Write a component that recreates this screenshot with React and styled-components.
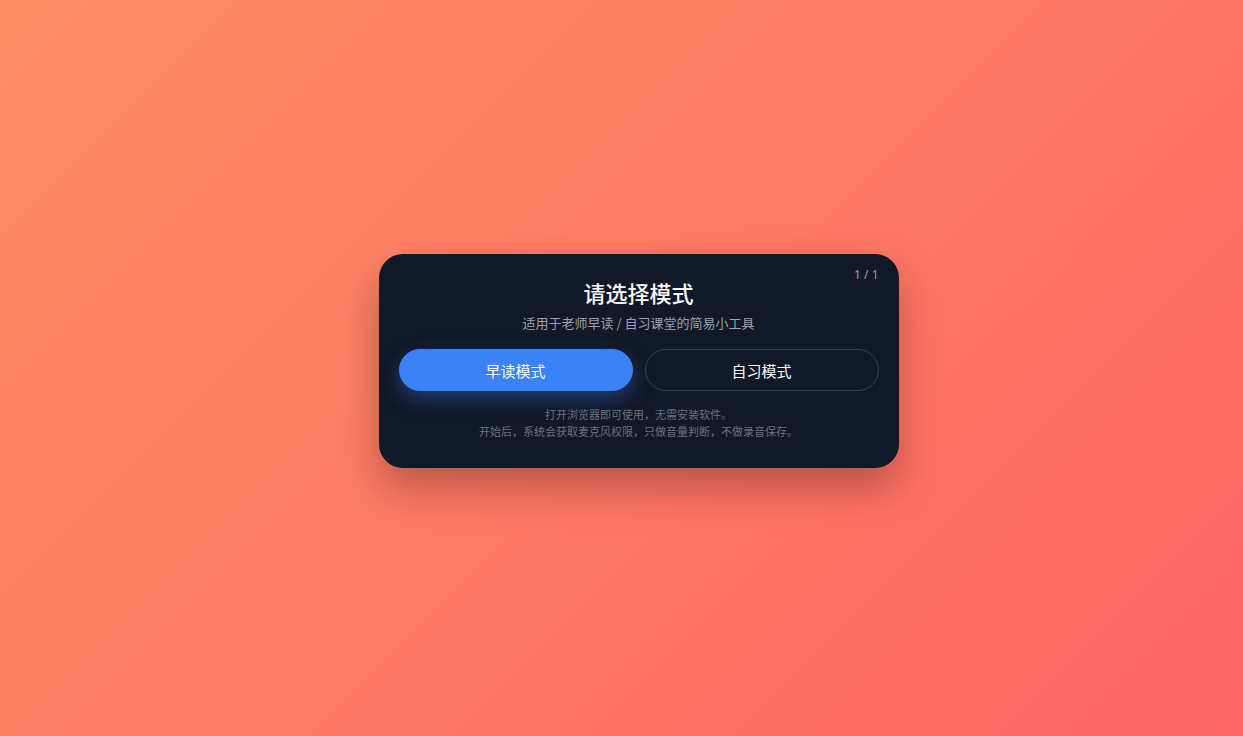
import React from 'react';
import styled, { createGlobalStyle } from 'styled-components';

const GlobalStyle = createGlobalStyle`
    html, body, #root {
        margin: 0;
        height: 100%;
    }
    body {
        font-family: "Noto Sans CJK SC", "Noto Sans", sans-serif;
    }
`;

const Page = styled.div`
    height: 100vh;
    box-sizing: border-box;
    padding: 0 0 14px 34px;
    display: flex;
    align-items: center;
    justify-content: center;
    background: linear-gradient(135deg, #ff8e66 0%, #ff6663 100%);
`;

const Card = styled.div`
    position: relative;
    width: 520px;
    box-sizing: border-box;
    padding: 22px 20px 28px;
    background: #111827;
    border-radius: 24px;
    box-shadow: 0 20px 40px rgba(60, 20, 20, 0.35);
    display: flex;
    flex-direction: column;
    align-items: center;
    color: #f9fafb;
`;

const Counter = styled.span`
    position: absolute;
    top: 12px;
    right: 20px;
    font-size: 12px;
    color: #9ca3af;
    font-family: "Noto Sans", sans-serif;
`;

const Title = styled.h1`
    margin: 0;
    font-size: 22px;
    font-weight: 500;
    line-height: 32px;
    color: #f9fafb;
`;

const Subtitle = styled.p`
    margin: 5px 0 0;
    font-size: 13px;
    line-height: 20px;
    color: #9ca3af;
`;

const ButtonRow = styled.div`
    margin-top: 16px;
    width: 100%;
    display: grid;
    grid-template-columns: 1fr 1fr;
    gap: 12px;
`;

const ModeButton = styled.button`
    height: 42px;
    border-radius: 999px;
    font-family: inherit;
    font-size: 15px;
    cursor: pointer;
    color: #f9fafb;
    border: 1px solid ${p => (p.$primary ? '#3b82f6' : '#374151')};
    background: ${p => (p.$primary ? '#3b82f6' : 'transparent')};
    box-shadow: ${p => (p.$primary ? '0 8px 20px rgba(59, 130, 246, 0.35)' : 'none')};
`;

const Notes = styled.div`
    margin-top: 15px;
    font-size: 11px;
    line-height: 17px;
    color: #6b7280;
    text-align: center;
`;

const App = () => {
    return (
        <>
            <GlobalStyle />
            <Page>
                <Card>
                    <Counter>1 / 1</Counter>
                    <Title>请选择模式</Title>
                    <Subtitle>适用于老师早读 / 自习课堂的简易小工具</Subtitle>
                    <ButtonRow>
                        <ModeButton $primary>早读模式</ModeButton>
                        <ModeButton>自习模式</ModeButton>
                    </ButtonRow>
                    <Notes>
                        <div>打开浏览器即可使用，无需安装软件。</div>
                        <div>开始后，系统会获取麦克风权限，只做音量判断，不做录音保存。</div>
                    </Notes>
                </Card>
            </Page>
        </>
    );
};

export default App;
